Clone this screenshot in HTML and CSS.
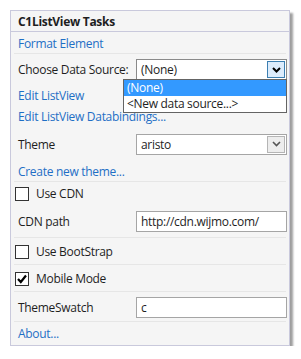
FILE: index.html
```html
<!DOCTYPE html>
<html>
<head>
<meta charset="utf-8">
<link rel="stylesheet" href="styles.css">
</head>
<body>
<div class="panel">
  <div class="hdr">C1ListView Tasks</div>
  <div class="row h21 sep"><span class="link">Format Element</span></div>
  <div class="row h31">
    <span class="lbl">Choose Data Source:</span>
    <div class="select focus">
      <span class="val">(None)</span>
      <span class="btn btn-hot"><svg width="9" height="6" viewBox="0 0 9 6"><path d="M1 1 L4.5 4.5 L8 1" fill="none" stroke="#000" stroke-width="2"/></svg></span>
      <ul class="dropdown">
        <li class="sel">(None)</li>
        <li>&lt;New data source...&gt;</li>
      </ul>
    </div>
  </div>
  <div class="row h21"><span class="link">Edit ListView</span></div>
  <div class="row h21"><span class="link">Edit ListView Databindings...</span></div>
  <div class="row h34">
    <span class="lbl">Theme</span>
    <div class="select">
      <span class="val">aristo</span>
      <span class="btn"><svg width="9" height="6" viewBox="0 0 9 6"><path d="M1 1 L4.5 4.5 L8 1" fill="none" stroke="#555" stroke-width="1.6"/></svg></span>
    </div>
  </div>
  <div class="row h20 sep"><span class="link">Create new theme...</span></div>
  <div class="row h23 chkrow"><span class="chk"></span><span class="lbl">Use CDN</span></div>
  <div class="row h32 sep">
    <span class="lbl">CDN path</span>
    <div class="textbox">http://cdn.wijmo.com/</div>
  </div>
  <div class="row h26 chkrow sep"><span class="chk"></span><span class="lbl">Use BootStrap</span></div>
  <div class="row h26 chkrow sep"><span class="chk"><svg width="12" height="12" viewBox="0 0 12 12"><path d="M2 6 L4.8 9 L10 2.5" fill="none" stroke="#000" stroke-width="2.2"/></svg></span><span class="lbl">Mobile Mode</span></div>
  <div class="row h29 sep">
    <span class="lbl">ThemeSwatch</span>
    <div class="textbox">c</div>
  </div>
  <div class="row h23"><span class="link">About...</span></div>
</div>
</body>
</html>
```
FILE: styles.css
```css
* { box-sizing: border-box; }
html, body { margin: 0; padding: 0; background: #fff; }
body {
  font-family: "Open Sans", "Noto Sans", sans-serif;
  font-size: 12px;
  letter-spacing: -0.3px;
  color: #1e1e1e;
}
.panel {
  margin: 10px 0 0 10px;
  width: 280px;
  height: 336px;
  background: #f5f5f5;
  border: 1px solid #c9c9dc;
  box-shadow: 3px 3px 2px rgba(0,0,0,0.38);
}
.hdr {
  height: 21px;
  border-bottom: 1px solid #c9c9dc;
  font-weight: bold;
  padding-left: 7px;
  display: flex;
  align-items: center;
}
.row {
  display: flex;
  align-items: center;
  padding-left: 7px;
  position: relative;
}
.row.sep::after {
  content: "";
  position: absolute;
  left: 3px;
  right: 3px;
  bottom: 0;
  height: 1px;
  background: #e6e6e6;
}
.h20 { height: 21px; }
.h21 { height: 21px; }
.h21.sep { height: 22px; }
.h23 { height: 23px; }
.h26 { height: 27px; }
.h29 { height: 30px; }
.h31 { height: 31px; }
.h32 { height: 33px; }
.h34 { height: 34px; }
.link { color: #1f6fc5; }
.select, .textbox {
  margin-left: auto;
  margin-right: 2px;
  width: 151px;
  height: 21px;
  background: #fff;
  border: 1px solid #a5a5a5;
  display: flex;
  align-items: center;
  padding-left: 4px;
  position: relative;
}
.select.focus { border-color: #8a8a8a; }
.val { flex: 1; }
.btn {
  width: 18px;
  height: 17px;
  margin-right: 1px;
  border: 1px solid #b5b5b5;
  background: #ededed;
  display: flex;
  align-items: center;
  justify-content: center;
}
.btn-hot {
  border-color: #3c7fb1;
  background: #dcecfc;
}
.dropdown {
  list-style: none;
  margin: 0;
  padding: 0;
  position: absolute;
  left: -14px;
  top: 19px;
  width: 164px;
  background: #fff;
  border: 1px solid #646464;
  z-index: 2;
}
.dropdown li {
  height: 16px;
  line-height: 16px;
  padding-left: 3px;
}
.dropdown li.sel { background: #3399ff; color: #fff; }
.chkrow { padding-left: 4px; }
.chk {
  width: 14px;
  height: 14px;
  border: 1px solid #333;
  background: #fff;
  margin-right: 7px;
  display: flex;
  align-items: center;
  justify-content: center;
}
```
